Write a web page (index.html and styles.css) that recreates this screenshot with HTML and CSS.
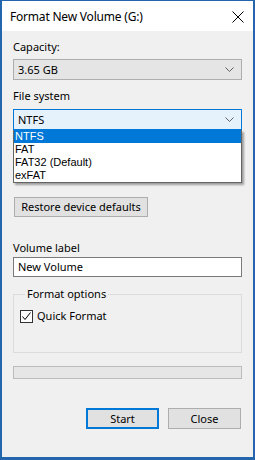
FILE: index.html
```html
<!DOCTYPE html>
<html>
<head>
<meta charset="utf-8">
<link rel="stylesheet" href="styles.css">
</head>
<body>
<div class="window">
  <div class="titlebar">
    <span class="title">Format New Volume (G:)</span>
    <svg class="close" width="12" height="12" viewBox="0 0 12 12"><path d="M0.5 0.5 L11.5 11.5 M11.5 0.5 L0.5 11.5" stroke="#000" stroke-width="1" fill="none"/></svg>
  </div>
  <div class="content">
    <div class="label first">Capacity:</div>
    <div class="combo">
      <span>3.65 GB</span>
      <svg class="chev" width="9" height="5" viewBox="0 0 9 5"><path d="M0.5 0.5 L4.5 4.5 L8.5 0.5" stroke="#606060" fill="none"/></svg>
    </div>
    <div class="label">File system</div>
    <div class="combo-wrap">
      <div class="combo active">
        <span>NTFS</span>
        <svg class="chev" width="9" height="5" viewBox="0 0 9 5"><path d="M0.5 0.5 L4.5 4.5 L8.5 0.5" stroke="#606060" fill="none"/></svg>
      </div>
      <ul class="dropdown">
        <li class="sel">NTFS</li>
        <li>FAT</li>
        <li>FAT32 (Default)</li>
        <li>exFAT</li>
      </ul>
    </div>
    <div class="spacer"></div>
    <button class="btn restore">Restore device defaults</button>
    <div class="label vol">Volume label</div>
    <div class="textbox">New Volume</div>
    <fieldset class="group">
      <legend>Format options</legend>
      <div class="check-row">
        <span class="checkbox"><svg width="11" height="11" viewBox="0 0 11 11"><path d="M1.5 5.5 L4 8.5 L9.5 1.5" stroke="#000" stroke-width="1" fill="none"/></svg></span>
        <span>Quick Format</span>
      </div>
    </fieldset>
    <div class="progress"></div>
    <div class="buttons">
      <button class="btn action default">Start</button>
      <button class="btn action">Close</button>
    </div>
  </div>
</div>
</body>
</html>
```

FILE: styles.css
```css
* { box-sizing: border-box; }
html, body { margin: 0; padding: 0; }
body {
  width: 255px;
  height: 460px;
  font-family: "Noto Sans", "Open Sans", sans-serif;
  font-size: 11px;
  color: #000;
  background: #fff;
}
.window {
  width: 255px;
  height: 460px;
  border-style: solid;
  border-color: #2466ae;
  border-width: 1px 2px 3px 2px;
  background: #f0f0f0;
  display: flex;
  flex-direction: column;
}
.titlebar {
  height: 30px;
  background: #fff;
  display: flex;
  align-items: center;
  justify-content: space-between;
  padding: 0 9px 0 8px;
  flex-shrink: 0;
}
.title {
  font-size: 12px;
  line-height: 16px;
  margin-top: 1px;
  letter-spacing: -0.2px;
}
.close { display: block; margin-top: 2px; }
.content {
  padding: 0 11px;
  display: flex;
  flex-direction: column;
  flex: 1;
}
.label {
  line-height: 14px;
  height: 14px;
  margin-top: 9px;
  margin-bottom: 6px;
}
.label.first { margin-top: 9px; margin-bottom: 5px; }
.combo {
  height: 21px;
  border: 1px solid #adadad;
  background: #e5e5e5;
  display: flex;
  align-items: center;
  justify-content: space-between;
  padding: 0 7px 0 4px;
  line-height: 14px;
}
.combo.active {
  border-color: #0078d7;
  background: #e5f1fb;
}
.combo-wrap { position: relative; }
.dropdown {
  position: absolute;
  left: 0;
  right: 0;
  top: 21px;
  margin: 0;
  padding: 0;
  list-style: none;
  background: #fff;
  border: 1px solid #646464;
  border-top: none;
  box-shadow: 2px 2px 2px rgba(0,0,0,0.35);
  z-index: 2;
  font-family: "Liberation Sans", Arial, sans-serif;
  font-size: 11px;
}
.dropdown li {
  height: 13px;
  line-height: 13px;
  padding-left: 1px;
}
.dropdown li.sel {
  background: #0078d7;
  color: #fff;
}
.spacer { height: 67px; flex-shrink: 0; }
.btn {
  font-family: inherit;
  font-size: 11px;
  color: #000;
  background: #e1e1e1;
  border: 1px solid #adadad;
  padding: 0;
  margin: 0;
}
.restore {
  align-self: flex-start;
  width: 134px;
  height: 20px;
  margin-left: 1px;
  line-height: 14px;
}
.label.vol { margin-top: 24px; margin-bottom: 2px; }
.textbox {
  height: 20px;
  background: #fff;
  border: 1px solid #7a7a7a;
  padding: 0 4px;
  line-height: 18px;
}
.group {
  margin: 10px 0 0 0;
  padding: 8px 7px 0 6px;
  height: 66px;
  border: 1px solid #dcdcdc;
  min-width: 0;
}
.group legend {
  padding: 0 2px;
  margin-left: 5px;
  line-height: 14px;
}
.check-row {
  display: flex;
  align-items: center;
  gap: 4px;
  line-height: 14px;
}
.checkbox {
  width: 13px;
  height: 13px;
  border: 1px solid #333;
  background: #fff;
  display: flex;
  align-items: center;
  justify-content: center;
}
.checkbox svg { display: block; }
.progress {
  margin-top: 13px;
  height: 13px;
  background: #e6e6e6;
  border: 1px solid #bcbcbc;
}
.buttons {
  margin-top: 29px;
  display: flex;
  justify-content: flex-end;
  gap: 9px;
  padding-right: 1px;
}
.action {
  width: 73px;
  height: 21px;
}
.action.default {
  border: 2px solid #0078d7;
}
```
